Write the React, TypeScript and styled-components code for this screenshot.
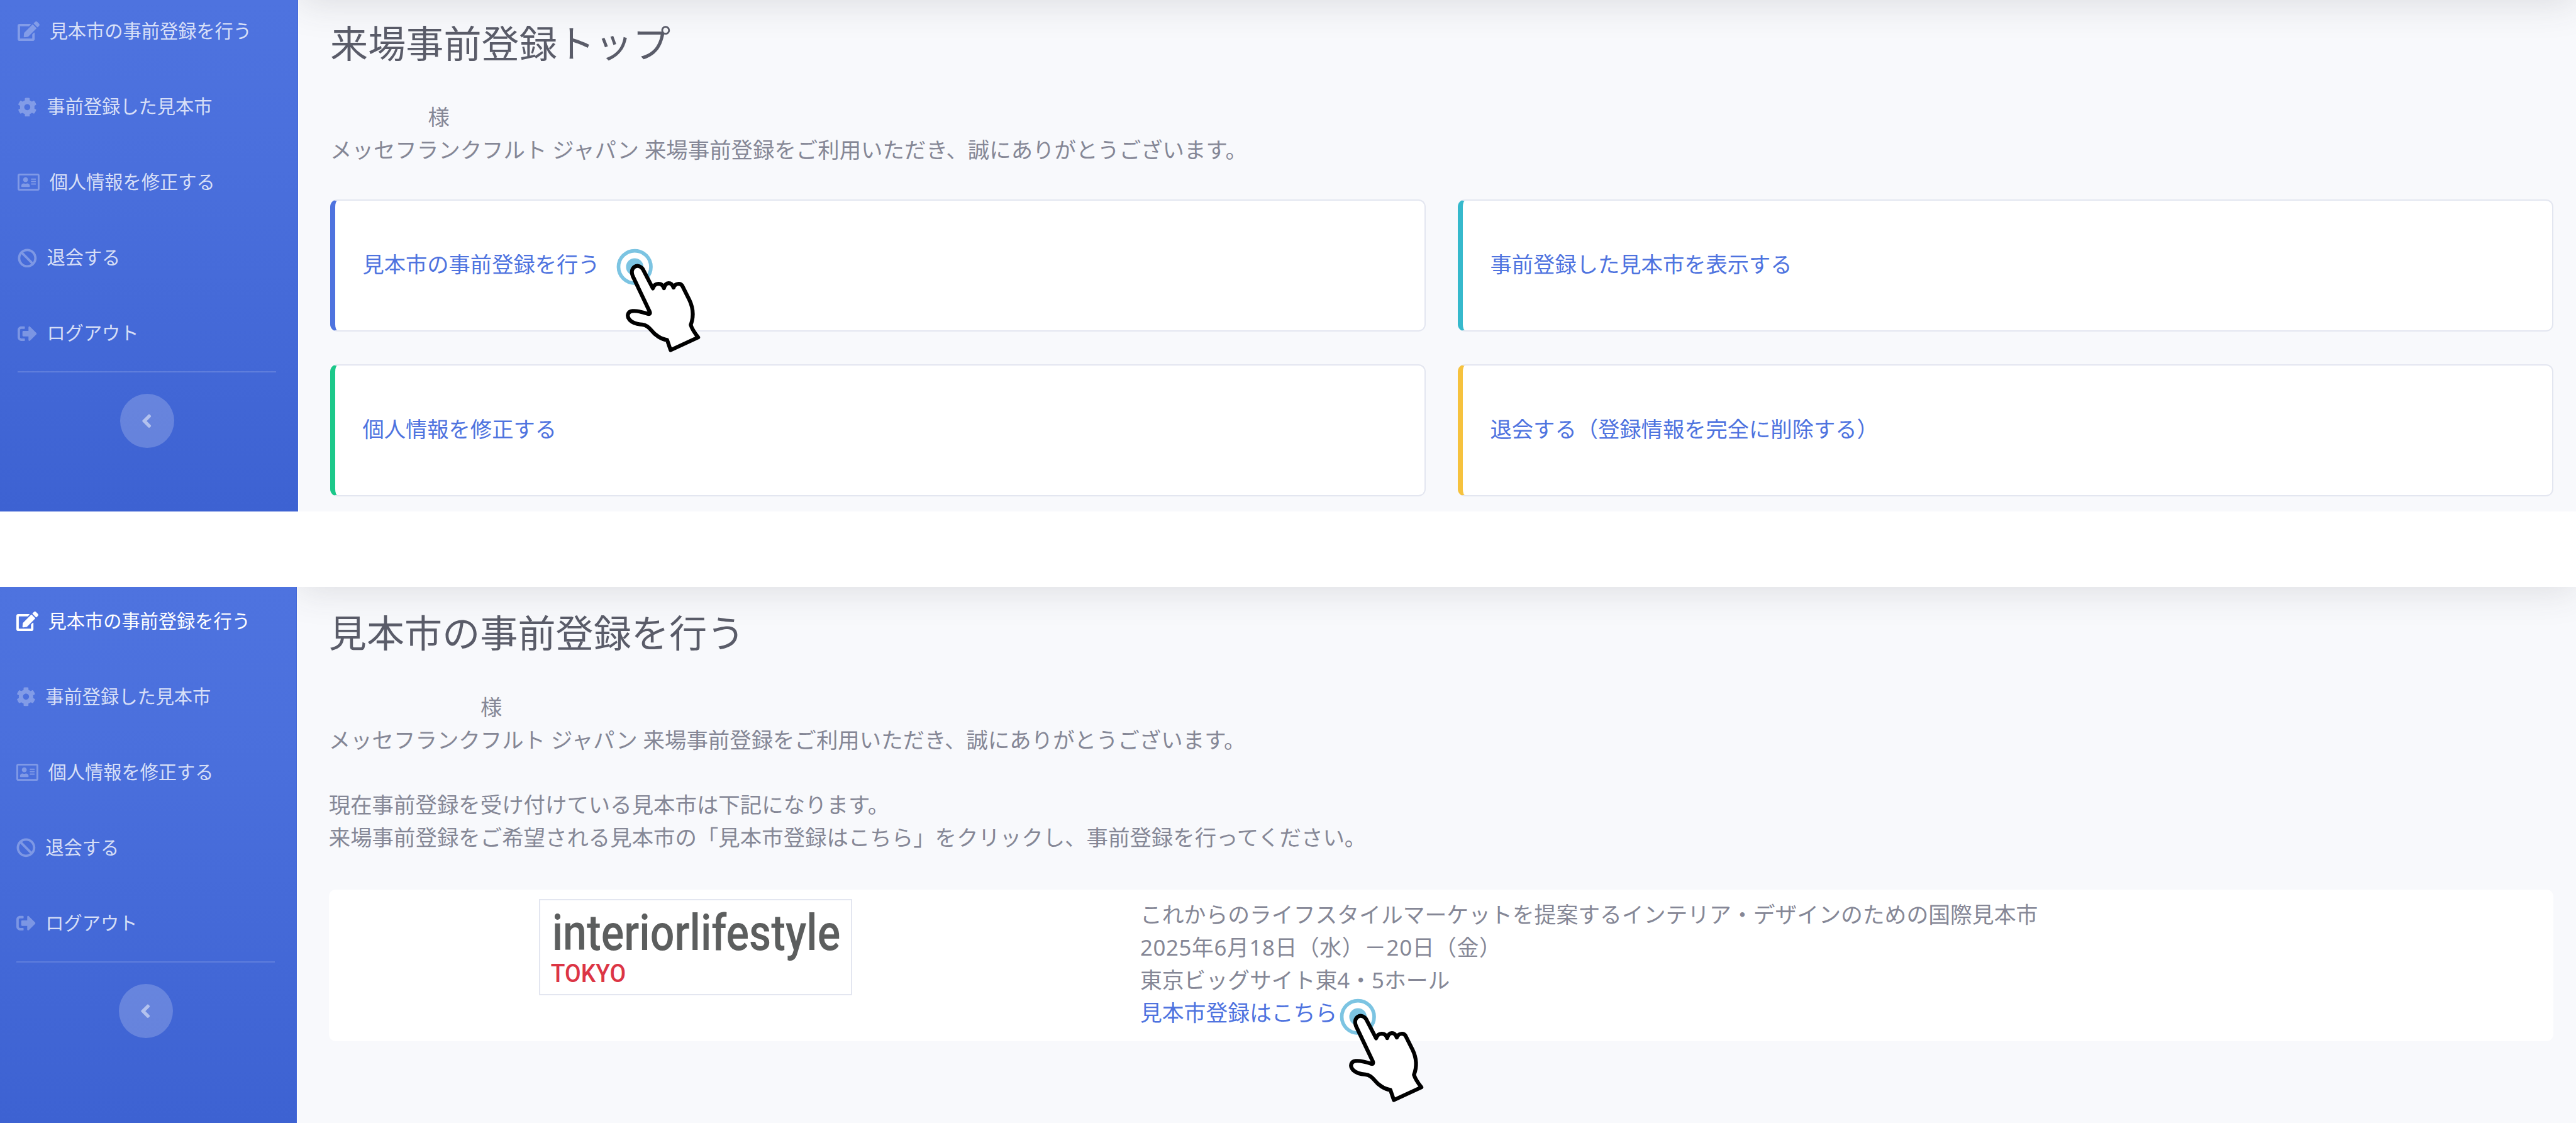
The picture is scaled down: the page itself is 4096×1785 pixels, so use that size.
import React from 'react';
import styled, { createGlobalStyle } from 'styled-components';
import {
  FaEdit,
  FaCog,
  FaRegAddressCard,
  FaBan,
  FaSignOutAlt,
  FaAngleLeft,
} from 'react-icons/fa';

/* design units -> css pixels */
const u = (n: number) => `${Math.round(((n * 4096) / 4400) * 100) / 100}px`;

const GlobalStyle = createGlobalStyle`
  *, *::before, *::after { box-sizing: border-box; }
  html, body { margin: 0; padding: 0; background: #fff; }
  body {
    font-family: "Noto Sans", "Noto Sans CJK JP", sans-serif;
    color: #858796;
    overflow: hidden;
  }
`;

const Page = styled.div`
  width: 4096px;
  height: 1785px;
  display: flex;
  flex-direction: column;
  justify-content: space-between;
  overflow: hidden;
  background: #fff;
`;

const Panel = styled.section<{ $height: number }>`
  display: flex;
  height: ${(p) => u(p.$height)};
  overflow: hidden;
  background: #f8f9fc;
`;

const Sidebar = styled.nav<{ $width: number; $lift: number; $inset: number }>`
  flex: none;
  display: flex;
  flex-direction: column;
  width: ${(p) => u(p.$width)};
  padding: 0 ${u(36)} 0 ${(p) => u(p.$inset)};
  border-right: ${u(1)} solid #4367d8;
  background: linear-gradient(180deg, #4e73df 0%, #4a6fdc 33%, #3d62d2 100%);
  z-index: 1;

  &::before {
    content: '';
    flex: none;
    margin-top: ${(p) => u(p.$lift)};
  }
`;

const NavItem = styled.a<{ $active?: boolean }>`
  flex: none;
  display: flex;
  align-items: center;
  height: ${u(129)};
  gap: ${u(17)};
  font-size: ${u(31.4)};
  line-height: 1.5;
  white-space: nowrap;
  color: ${(p) => (p.$active ? '#fff' : 'rgba(255, 255, 255, 0.8)')};

  svg {
    flex: none;
    color: ${(p) => (p.$active ? '#fff' : 'rgba(255, 255, 255, 0.3)')};
  }
`;

const Divider = styled.hr`
  flex: none;
  width: 100%;
  height: ${u(2.4)};
  margin: 0;
  border: 0;
  background: rgba(255, 255, 255, 0.15);
`;

const Toggle = styled.button`
  flex: none;
  align-self: center;
  display: flex;
  align-items: center;
  justify-content: center;
  width: ${u(92.5)};
  height: ${u(92.5)};
  margin: ${u(36.5)} 0 0;
  padding: 0;
  border: 0;
  border-radius: 50%;
  background: rgba(255, 255, 255, 0.2);
  color: rgba(255, 255, 255, 0.5);
`;

const Content = styled.main<{ $left: number; $top: number }>`
  position: relative;
  flex: 1;
  min-width: 0;
  padding: ${(p) => u(p.$top)} ${u(39)} 0 ${(p) => u(p.$left)};
  border-left: ${u(2)} solid #fff;

  &::before {
    content: '';
    position: absolute;
    left: 0;
    right: 0;
    bottom: 100%;
    height: ${u(160)};
    box-shadow: 0 ${u(5.5)} ${u(64)} rgba(58, 59, 69, 0.15);
  }
`;

const Title = styled.h1`
  margin: 0 0 ${u(59)};
  height: ${u(78)};
  font-size: ${u(64.6)};
  line-height: ${u(78)};
  font-weight: 400;
  white-space: nowrap;
  color: #5a5c69;
`;

const Line = styled.p<{ $indent?: number }>`
  margin: 0;
  height: ${u(55.7)};
  padding-left: ${(p) => u(p.$indent || 0)};
  font-size: ${u(37)};
  line-height: ${u(55.7)};
  white-space: nowrap;
`;

const CardGrid = styled.div`
  display: grid;
  grid-template-columns: 1fr 1fr;
  column-gap: ${u(55.5)};
  row-gap: ${u(55.5)};
  margin-top: ${u(57.5)};
`;

const Card = styled.div<{ $accent: string }>`
  display: flex;
  align-items: center;
  height: ${u(225.8)};
  padding: 0 0 ${u(5)} ${u(46.5)};
  border: ${u(2.4)} solid #e3e6f0;
  border-left: ${u(9.2)} solid ${(p) => p.$accent};
  border-radius: ${u(12.5)};
  background: #fff;
`;

const Link = styled.a`
  position: relative;
  font-size: ${u(36.85)};
  line-height: ${u(55.7)};
  white-space: nowrap;
  color: #4e73df;
`;

const FairCard = styled.div`
  display: flex;
  align-items: flex-start;
  height: ${u(259)};
  margin-top: ${u(61)};
  border-radius: ${u(12)};
  background: #fff;
`;

const LogoColumn = styled.div`
  flex: none;
  width: ${u(1386)};
  padding: ${u(16.7)} 0 0 ${u(359.5)};
`;

const LogoFrame = styled.div`
  width: ${u(535)};
  height: ${u(164)};
  border: ${u(2.4)} solid #e3e6f0;
  background: #fff;

  svg {
    display: block;
    width: 100%;
    height: 100%;
    overflow: visible;
    font-family: Roboto, sans-serif;
    font-weight: 500;
  }
`;

const FairInfo = styled.div`
  padding-top: ${u(15.5)};

  ${Line}, ${Link} {
    font-size: ${u(37.4)};
  }
`;

const DateText = styled.span`
  letter-spacing: ${u(0.65)};
`;

const Pointer = styled.svg<{ $x: number; $y: number }>`
  position: absolute;
  left: ${(p) => u(p.$x)};
  top: ${(p) => u(p.$y)};
  width: ${u(200)};
  height: ${u(200)};
  z-index: 2;
`;

const ClickPointer = ({ x, y }: { x: number; y: number }) => (
  <Pointer viewBox="0 0 600 600" $x={x} $y={y} aria-hidden="true">
    <circle cx="120" cy="133" r="83" fill="none" stroke="#7cc4e2" strokeWidth="18.5" />
    <circle cx="120" cy="133" r="44.5" fill="#7cc4e2" />
    <path
      d="M304 559 L286 507 C256 504 222 480 207 460 C192 440 178 430 158 428 C140 427 114 424 96 406 C76 386 84 362 108 359 C132 356 166 366 190 374 C197 375 200 370 197 363 L110 180 C92 136 136 110 161 143 L213 243 C222 213 260 211 270 242 C278 208 308 208 319 239 C328 214 356 216 364 230 L400 302 C422 348 424 386 407 430 C415 455 430 475 445 494 Z"
      fill="#fff"
      stroke="#000"
      strokeWidth="20"
      strokeLinejoin="round"
    />
  </Pointer>
);

const navItems = [
  { label: '見本市の事前登録を行う', Icon: FaEdit, w: 37.5, h: 33.4 },
  { label: '事前登録した見本市', Icon: FaCog, w: 33, h: 33 },
  { label: '個人情報を修正する', Icon: FaRegAddressCard, w: 37.5, h: 33.4 },
  { label: '退会する', Icon: FaBan, w: 33, h: 33 },
  { label: 'ログアウト', Icon: FaSignOutAlt, w: 33, h: 33 },
];

const SideMenu = ({
  width,
  lift,
  inset,
  active,
}: {
  width: number;
  lift: number;
  inset: number;
  active?: number;
}) => (
  <Sidebar $width={width} $lift={lift} $inset={inset}>
    {navItems.map(({ label, Icon, w, h }, i) => (
      <NavItem key={label} $active={i === active}>
        <Icon width={u(w)} height={u(h)} style={{ width: u(w), height: u(h) }} />
        <span>{label}</span>
      </NavItem>
    ))}
    <Divider />
    <Toggle aria-label="toggle">
      <FaAngleLeft size={u(37)} />
    </Toggle>
  </Sidebar>
);

const GREETING =
  'メッセフランクフルト ジャパン 来場事前登録をご利用いただき、誠にありがとうございます。';

export default function App() {
  return (
    <Page>
      <GlobalStyle />
      <Panel $height={873}>
        <SideMenu width={509} lift={-11} inset={30} />
        <Content $left={54} $top={35}>
          <Title>来場事前登録トップ</Title>
          <Line $indent={167}>様</Line>
          <Line>{GREETING}</Line>
          <CardGrid>
            <Card $accent="#4e73df">
              <Link>
                見本市の事前登録を行う
                <ClickPointer x={424.5} y={-11.5} />
              </Link>
            </Card>
            <Card $accent="#36b9cc">
              <Link>事前登録した見本市を表示する</Link>
            </Card>
            <Card $accent="#1cc88a">
              <Link>個人情報を修正する</Link>
            </Card>
            <Card $accent="#f6c23e">
              <Link>退会する（登録情報を完全に削除する）</Link>
            </Card>
          </CardGrid>
        </Content>
      </Panel>
      <Panel $height={915.7}>
        <SideMenu width={507} lift={-5.5} inset={27.7} active={0} />
        <Content $left={53.5} $top={40.5}>
          <Title>見本市の事前登録を行う</Title>
          <Line $indent={259}>様</Line>
          <Line>{GREETING}</Line>
          <Line />
          <Line>現在事前登録を受け付けている見本市は下記になります。</Line>
          <Line>
            来場事前登録をご希望される見本市の「見本市登録はこちら」をクリックし、事前登録を行ってください。
          </Line>
          <FairCard>
            <LogoColumn>
              <LogoFrame>
                <svg viewBox="0 0 530 159">
                  <text
                    x="20"
                    y="84"
                    fontSize="85"
                    fill="#5c5e5e"
                    textLength="492"
                    lengthAdjust="spacingAndGlyphs"
                  >
                    interiorlifestyle
                  </text>
                  <text
                    x="18"
                    y="139.5"
                    fontSize="43"
                    fill="#dc3545"
                    textLength="128"
                    lengthAdjust="spacingAndGlyphs"
                  >
                    TOKYO
                  </text>
                </svg>
              </LogoFrame>
            </LogoColumn>
            <FairInfo>
              <Line>
                これからのライフスタイルマーケットを提案するインテリア・デザインのための国際見本市
              </Line>
              <Line>
                <DateText>2025年6月18日（水）－20日（金）</DateText>
              </Line>
              <Line>東京ビッグサイト東4・5ホール</Line>
              <Line>
                <Link>
                  見本市登録はこちら
                  <ClickPointer x={331.5} y={-12} />
                </Link>
              </Line>
            </FairInfo>
          </FairCard>
        </Content>
      </Panel>
    </Page>
  );
}
